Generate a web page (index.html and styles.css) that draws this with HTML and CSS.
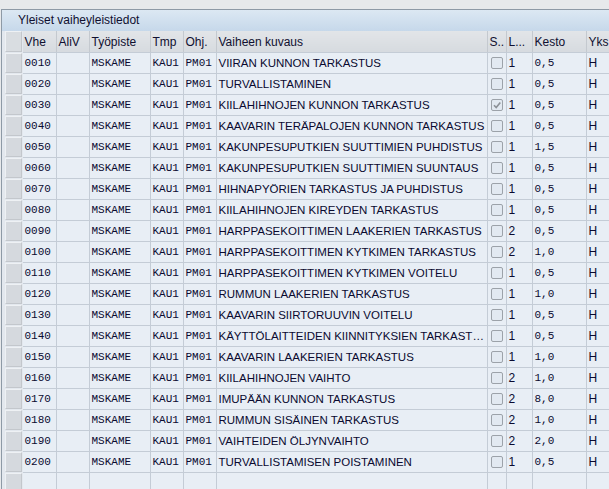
FILE: index.html
```html
<!DOCTYPE html>
<html lang="fi">
<head>
<meta charset="utf-8">
<title>Yleiset vaiheyleistiedot</title>
<link rel="stylesheet" href="styles.css">
</head>
<body>
<div class="panel">
  <div class="title">Yleiset vaiheyleistiedot</div>
  <div class="tablewrap">
    <table class="grid">
      <colgroup>
        <col class="c-sel"><col class="c-vhe"><col class="c-aliv"><col class="c-tp"><col class="c-tmp"><col class="c-ohj"><col class="c-kuv"><col class="c-s"><col class="c-l"><col class="c-kesto"><col class="c-yks">
      </colgroup>
      <thead>
        <tr>
          <th class="sel"><span class="btn"></span></th>
          <th>Vhe</th><th>AliV</th><th>Työpiste</th><th>Tmp</th><th>Ohj.</th><th>Vaiheen kuvaus</th><th>S..</th><th>L...</th><th>Kesto</th><th>Yks</th>
        </tr>
      </thead>
      <tbody>
        <tr><td class="sel"><span class="btn"></span></td><td class="mono">0010</td><td></td><td class="mono">MSKAME</td><td class="mono">KAU1</td><td class="mono">PM01</td><td class="txt">VIIRAN KUNNON TARKASTUS</td><td class="chk"><span class="box"></span></td><td>1</td><td class="mono">0,5</td><td>H</td></tr>
        <tr><td class="sel"><span class="btn"></span></td><td class="mono">0020</td><td></td><td class="mono">MSKAME</td><td class="mono">KAU1</td><td class="mono">PM01</td><td class="txt">TURVALLISTAMINEN</td><td class="chk"><span class="box"></span></td><td>1</td><td class="mono">0,5</td><td>H</td></tr>
        <tr><td class="sel"><span class="btn"></span></td><td class="mono">0030</td><td></td><td class="mono">MSKAME</td><td class="mono">KAU1</td><td class="mono">PM01</td><td class="txt">KIILAHIHNOJEN KUNNON TARKASTUS</td><td class="chk"><span class="box"><svg viewBox="0 0 12 12" width="12" height="12"><path d="M3 6.2 L5.2 8.6 L9.3 3.4" fill="none" stroke="#8c9197" stroke-width="1.6"/></svg></span></td><td>1</td><td class="mono">0,5</td><td>H</td></tr>
        <tr><td class="sel"><span class="btn"></span></td><td class="mono">0040</td><td></td><td class="mono">MSKAME</td><td class="mono">KAU1</td><td class="mono">PM01</td><td class="txt">KAAVARIN TERÄPALOJEN KUNNON TARKASTUS</td><td class="chk"><span class="box"></span></td><td>1</td><td class="mono">0,5</td><td>H</td></tr>
        <tr><td class="sel"><span class="btn"></span></td><td class="mono">0050</td><td></td><td class="mono">MSKAME</td><td class="mono">KAU1</td><td class="mono">PM01</td><td class="txt">KAKUNPESUPUTKIEN SUUTTIMIEN PUHDISTUS</td><td class="chk"><span class="box"></span></td><td>1</td><td class="mono">1,5</td><td>H</td></tr>
        <tr><td class="sel"><span class="btn"></span></td><td class="mono">0060</td><td></td><td class="mono">MSKAME</td><td class="mono">KAU1</td><td class="mono">PM01</td><td class="txt">KAKUNPESUPUTKIEN SUUTTIMIEN SUUNTAUS</td><td class="chk"><span class="box"></span></td><td>1</td><td class="mono">0,5</td><td>H</td></tr>
        <tr><td class="sel"><span class="btn"></span></td><td class="mono">0070</td><td></td><td class="mono">MSKAME</td><td class="mono">KAU1</td><td class="mono">PM01</td><td class="txt">HIHNAPYÖRIEN TARKASTUS JA PUHDISTUS</td><td class="chk"><span class="box"></span></td><td>1</td><td class="mono">0,5</td><td>H</td></tr>
        <tr><td class="sel"><span class="btn"></span></td><td class="mono">0080</td><td></td><td class="mono">MSKAME</td><td class="mono">KAU1</td><td class="mono">PM01</td><td class="txt">KIILAHIHNOJEN KIREYDEN TARKASTUS</td><td class="chk"><span class="box"></span></td><td>1</td><td class="mono">0,5</td><td>H</td></tr>
        <tr><td class="sel"><span class="btn"></span></td><td class="mono">0090</td><td></td><td class="mono">MSKAME</td><td class="mono">KAU1</td><td class="mono">PM01</td><td class="txt">HARPPASEKOITTIMEN LAAKERIEN TARKASTUS</td><td class="chk"><span class="box"></span></td><td>2</td><td class="mono">0,5</td><td>H</td></tr>
        <tr><td class="sel"><span class="btn"></span></td><td class="mono">0100</td><td></td><td class="mono">MSKAME</td><td class="mono">KAU1</td><td class="mono">PM01</td><td class="txt">HARPPASEKOITTIMEN KYTKIMEN TARKASTUS</td><td class="chk"><span class="box"></span></td><td>2</td><td class="mono">1,0</td><td>H</td></tr>
        <tr><td class="sel"><span class="btn"></span></td><td class="mono">0110</td><td></td><td class="mono">MSKAME</td><td class="mono">KAU1</td><td class="mono">PM01</td><td class="txt">HARPPASEKOITTIMEN KYTKIMEN VOITELU</td><td class="chk"><span class="box"></span></td><td>1</td><td class="mono">0,5</td><td>H</td></tr>
        <tr><td class="sel"><span class="btn"></span></td><td class="mono">0120</td><td></td><td class="mono">MSKAME</td><td class="mono">KAU1</td><td class="mono">PM01</td><td class="txt">RUMMUN LAAKERIEN TARKASTUS</td><td class="chk"><span class="box"></span></td><td>1</td><td class="mono">1,0</td><td>H</td></tr>
        <tr><td class="sel"><span class="btn"></span></td><td class="mono">0130</td><td></td><td class="mono">MSKAME</td><td class="mono">KAU1</td><td class="mono">PM01</td><td class="txt">KAAVARIN SIIRTORUUVIN VOITELU</td><td class="chk"><span class="box"></span></td><td>1</td><td class="mono">0,5</td><td>H</td></tr>
        <tr><td class="sel"><span class="btn"></span></td><td class="mono">0140</td><td></td><td class="mono">MSKAME</td><td class="mono">KAU1</td><td class="mono">PM01</td><td class="txt">KÄYTTÖLAITTEIDEN KIINNITYKSIEN TARKASTUS</td><td class="chk"><span class="box"></span></td><td>1</td><td class="mono">0,5</td><td>H</td></tr>
        <tr><td class="sel"><span class="btn"></span></td><td class="mono">0150</td><td></td><td class="mono">MSKAME</td><td class="mono">KAU1</td><td class="mono">PM01</td><td class="txt">KAAVARIN LAAKERIEN TARKASTUS</td><td class="chk"><span class="box"></span></td><td>1</td><td class="mono">1,0</td><td>H</td></tr>
        <tr><td class="sel"><span class="btn"></span></td><td class="mono">0160</td><td></td><td class="mono">MSKAME</td><td class="mono">KAU1</td><td class="mono">PM01</td><td class="txt">KIILAHIHNOJEN VAIHTO</td><td class="chk"><span class="box"></span></td><td>2</td><td class="mono">1,0</td><td>H</td></tr>
        <tr><td class="sel"><span class="btn"></span></td><td class="mono">0170</td><td></td><td class="mono">MSKAME</td><td class="mono">KAU1</td><td class="mono">PM01</td><td class="txt">IMUPÄÄN KUNNON TARKASTUS</td><td class="chk"><span class="box"></span></td><td>2</td><td class="mono">8,0</td><td>H</td></tr>
        <tr><td class="sel"><span class="btn"></span></td><td class="mono">0180</td><td></td><td class="mono">MSKAME</td><td class="mono">KAU1</td><td class="mono">PM01</td><td class="txt">RUMMUN SISÄINEN TARKASTUS</td><td class="chk"><span class="box"></span></td><td>2</td><td class="mono">1,0</td><td>H</td></tr>
        <tr><td class="sel"><span class="btn"></span></td><td class="mono">0190</td><td></td><td class="mono">MSKAME</td><td class="mono">KAU1</td><td class="mono">PM01</td><td class="txt">VAIHTEIDEN ÖLJYNVAIHTO</td><td class="chk"><span class="box"></span></td><td>2</td><td class="mono">2,0</td><td>H</td></tr>
        <tr><td class="sel"><span class="btn"></span></td><td class="mono">0200</td><td></td><td class="mono">MSKAME</td><td class="mono">KAU1</td><td class="mono">PM01</td><td class="txt">TURVALLISTAMISEN POISTAMINEN</td><td class="chk"><span class="box"></span></td><td>1</td><td class="mono">0,5</td><td>H</td></tr>
        <tr><td class="sel"><span class="btn"></span></td><td></td><td></td><td></td><td></td><td></td><td></td><td></td><td></td><td></td><td></td></tr>
      </tbody>
    </table>
  </div>
</div>
</body>
</html>
```
FILE: styles.css
```css
html, body {
  margin: 0;
  padding: 0;
  background: #e7e9eb;
  overflow: hidden;
}
body {
  font-family: Tahoma, "DejaVu Sans", "Liberation Sans", sans-serif;
  color: #0a0a30;
}
.panel {
  margin: 9px 0 0 1px;
  border-left: 1px solid #8e9aa6;
  border-top: 1px solid #8e9aa6;
  background: #e3e8ee;
  height: 480px;
  overflow: hidden;
}
.title {
  height: 21px;
  line-height: 21px;
  padding-left: 16px;
  font-family: "Liberation Sans", sans-serif;
  font-size: 12px;
  color: #101030;
  background: linear-gradient(#dce8f3, #c6d8ea);
}
.tablewrap {
  padding-left: 2px;
}
.grid {
  border-collapse: collapse;
  table-layout: fixed;
  width: 620px;
  font-family: "Liberation Sans", sans-serif;
  font-size: 12px;
}
.c-sel { width: 18px; }
.c-vhe { width: 34px; }
.c-aliv { width: 33px; }
.c-tp { width: 61px; }
.c-tmp { width: 33px; }
.c-ohj { width: 33px; }
.c-kuv { width: 271px; }
.c-s { width: 19px; }
.c-l { width: 26px; }
.c-kesto { width: 54px; }
.c-yks { width: 38px; }
th, td {
  padding: 0 0 0 2px;
  border-right: 1px solid #c4ccd6;
  border-bottom: 1px solid #c4ccd6;
  white-space: nowrap;
  overflow: hidden;
  text-overflow: ellipsis;
  text-align: left;
  font-weight: normal;
}
th {
  height: 21px;
  background: linear-gradient(#e2e5e8, #d6dadf);
  color: #101030;
  border-right-color: #c4c9cf;
  border-bottom-color: #c4ccd6;
}
td {
  height: 20px;
  background: #e8eef5;
  color: #0a0a30;
}
td.mono {
  font-family: "Liberation Mono", monospace;
  font-size: 11px;
}
td.txt {
  font-size: 11.5px;
  letter-spacing: 0;
}
th.sel, td.sel {
  padding: 0;
  border-right: 1px solid #e3e8ee;
  border-bottom: 1px solid #e3e8ee;
  background: #e3e8ee;
}
.btn {
  display: block;
  margin: 0 0 0 1px;
  height: 100%;
  box-sizing: border-box;
  border: 1px solid #eef1f4;
  border-right-color: #c3c7cc;
  border-bottom-color: #c3c7cc;
  background: #d5d9de;
}
th.sel .btn {
  height: 21px;
  background: #d9dde1;
}
td.sel .btn {
  height: 20px;
}
td.chk {
  padding: 0 0 0 3px;
}
.box {
  display: block;
  width: 12px;
  height: 12px;
  box-sizing: border-box;
  border: 1px solid #9ca2a9;
  border-radius: 2px;
  background: #e2e9f1;
  position: relative;
}
.box svg {
  position: absolute;
  left: -1px;
  top: -1px;
}
```
